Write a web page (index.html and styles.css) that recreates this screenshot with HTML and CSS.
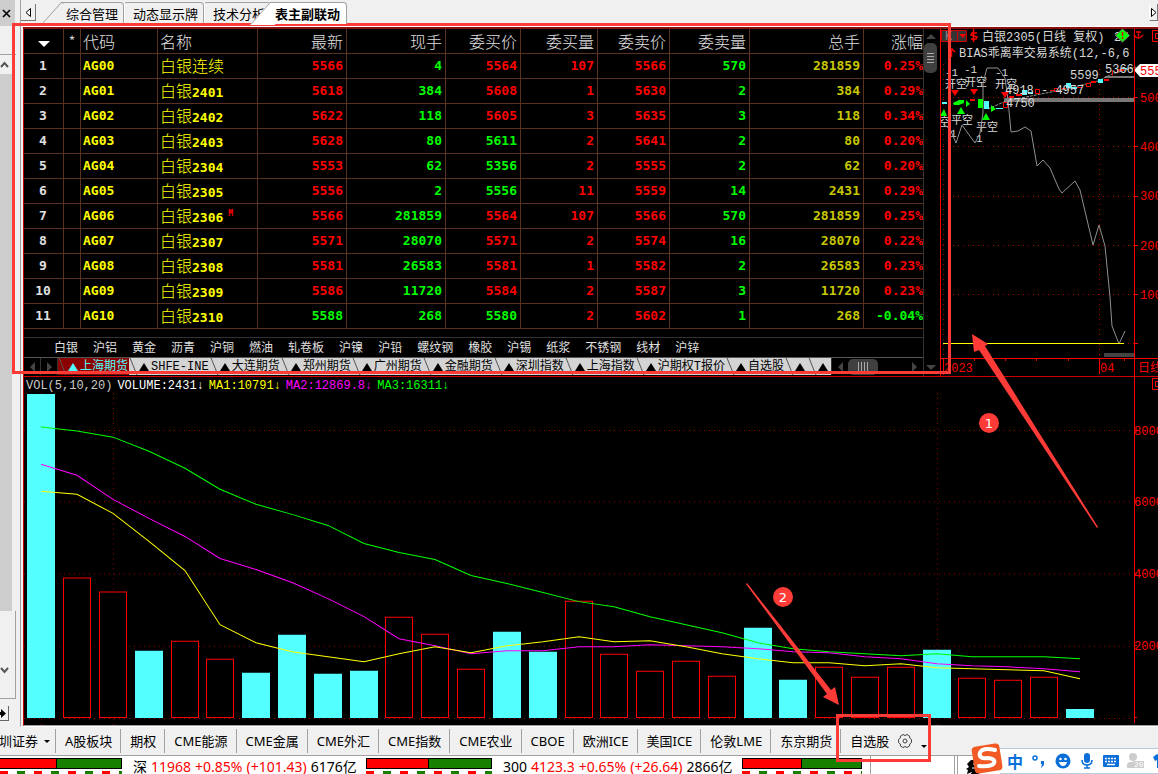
FILE: index.html
```html
<!DOCTYPE html>
<html lang="zh-CN">
<head>
    <meta charset="UTF-8">
    <meta name="viewport" content="width=device-width, initial-scale=1.0">
    <title>表主副联动</title>
    <link rel="stylesheet" href="styles.css">
</head>
<body>
    <div class="main">
        <!-- Left rail -->
        <aside class="rail">
            <button class="rail-close" aria-label="关闭"><svg width="9" height="9" viewBox="0 0 9 9"><path d="M1 1l7 7M8 1l-7 7" stroke="#000" stroke-width="1.6"/></svg></button>
            <div class="rail-gap"></div>
            <button class="rail-btn" aria-label="向上"><svg width="9" height="9" viewBox="0 0 9 9"><path d="M1 7l3.500-4L8 7" fill="none" stroke="#555" stroke-width="2"/></svg></button>
            <div class="rail-track"></div>
            <div class="rail-end">
                <button class="rail-btn" aria-label="向下"><svg width="9" height="9" viewBox="0 0 9 9"><path d="M1 2l3.500 4L8 2" fill="none" stroke="#555" stroke-width="2"/></svg></button>
            </div>
            <button class="rail-next" aria-label="展开"><svg width="6" height="9" viewBox="0 0 6 9"><path d="M0 3h1V0l5 4.500L1 9V6H0z"/></svg></button>
        </aside>

        <div class="workspace">
            <!-- Page tabs -->
            <nav class="tabs">
                <button class="tab-scroll" aria-label="左移"><svg width="6" height="9" viewBox="0 0 6 9"><path d="M5.500 .500v8L1 4.500z" fill="#fff" stroke="#000"/></svg></button>
                <button class="tab slanted">综合管理</button>
                <button class="tab">动态显示牌</button>
                <button class="tab">技术分析</button>
                <button class="tab slanted active">表主副联动</button>
                <button class="tab-scroll tab-right" aria-label="右移"><svg width="5" height="9" viewBox="0 0 5 9"><path d="M.500 .500v8L5 4.500z" fill="#fff" stroke="#000"/></svg></button>
            </nav>

            <div class="board">
                <div class="top">
                    <section class="quotes">
                        <div class="quotes-body">
                            <table class="quote-table">
                                <colgroup>
                                    <col class="w40"><col class="w17"><col class="w77"><col class="w100"><col class="w89"><col class="w99">
                                    <col class="w75"><col class="w77"><col class="w72"><col class="w80"><col class="w114"><col>
                                </colgroup>
                                <thead>
                                    <tr><th><i class="sort"></i></th><th>*</th><th>代码</th><th>名称</th><th>最新</th><th>现手</th><th>委买价</th><th>委买量</th><th>委卖价</th><th>委卖量</th><th>总手</th><th>涨幅</th></tr>
                                </thead>
                                <tbody>
                                    <tr><td>1</td><td></td><td>AG00</td><td><b>白银连续</b></td><td>5566</td><td>4</td><td>5564</td><td>107</td><td>5566</td><td>570</td><td>281859</td><td>0.25%</td></tr>
                                    <tr><td>2</td><td></td><td>AG01</td><td><b>白银</b>2401</td><td>5618</td><td>384</td><td>5608</td><td>1</td><td>5630</td><td>2</td><td>384</td><td>0.29%</td></tr>
                                    <tr><td>3</td><td></td><td>AG02</td><td><b>白银</b>2402</td><td>5622</td><td>118</td><td>5605</td><td>3</td><td>5635</td><td>3</td><td>118</td><td>0.34%</td></tr>
                                    <tr><td>4</td><td></td><td>AG03</td><td><b>白银</b>2403</td><td>5628</td><td>80</td><td class="down">5611</td><td>2</td><td>5641</td><td>2</td><td>80</td><td>0.20%</td></tr>
                                    <tr><td>5</td><td></td><td>AG04</td><td><b>白银</b>2304</td><td>5553</td><td>62</td><td class="down">5356</td><td>2</td><td>5555</td><td>2</td><td>62</td><td>0.20%</td></tr>
                                    <tr><td>6</td><td></td><td>AG05</td><td><b>白银</b>2305</td><td>5556</td><td>2</td><td class="down">5556</td><td>11</td><td>5559</td><td>14</td><td>2431</td><td>0.29%</td></tr>
                                    <tr><td>7</td><td></td><td>AG06</td><td><b>白银</b>2306 <sup>M</sup></td><td>5566</td><td>281859</td><td>5564</td><td>107</td><td>5566</td><td>570</td><td>281859</td><td>0.25%</td></tr>
                                    <tr><td>8</td><td></td><td>AG07</td><td><b>白银</b>2307</td><td>5571</td><td>28070</td><td>5571</td><td>2</td><td>5574</td><td>16</td><td>28070</td><td>0.22%</td></tr>
                                    <tr><td>9</td><td></td><td>AG08</td><td><b>白银</b>2308</td><td>5581</td><td>26583</td><td>5581</td><td>1</td><td>5582</td><td>2</td><td>26583</td><td>0.23%</td></tr>
                                    <tr><td>10</td><td></td><td>AG09</td><td><b>白银</b>2309</td><td>5586</td><td>11720</td><td>5584</td><td>2</td><td>5587</td><td>3</td><td>11720</td><td>0.23%</td></tr>
                                    <tr><td>11</td><td></td><td>AG10</td><td><b>白银</b>2310</td><td class="down">5588</td><td>268</td><td class="down">5580</td><td>2</td><td>5602</td><td>1</td><td>268</td><td class="down">-0.04%</td></tr>
                                </tbody>
                            </table>

                            <nav class="metals">
                                <a href="#">白银</a><a href="#">沪铝</a><a href="#">黄金</a><a href="#">沥青</a><a href="#">沪铜</a><a href="#">燃油</a><a href="#">轧卷板</a><a href="#">沪镍</a><a href="#">沪铅</a><a href="#">螺纹钢</a><a href="#">橡胶</a><a href="#">沪锡</a><a href="#">纸浆</a><a href="#">不锈钢</a><a href="#">线材</a><a href="#">沪锌</a>
                            </nav>

                            <div class="sheets">
                                <button class="step" aria-label="上一页"><i class="tri left"></i></button>
                                <button class="step" aria-label="下一页"><i class="tri right"></i></button>
                                <button class="sheet current">上海期货</button>
                                <button class="sheet">SHFE-INE</button>
                                <button class="sheet">大连期货</button>
                                <button class="sheet">郑州期货</button>
                                <button class="sheet">广州期货</button>
                                <button class="sheet">金融期货</button>
                                <button class="sheet">深圳指数</button>
                                <button class="sheet">上海指数</button>
                                <button class="sheet">沪期权T报价</button>
                                <button class="sheet">自选股</button>
                                <button class="sheet" aria-label="板块一"></button>
                                <button class="sheet" aria-label="板块二"></button>
                                <div class="hscroll">
                                    <i class="tri left"></i>
                                    <div class="hthumb"><i></i><i></i><i></i><i></i></div>
                                    <i class="tri right"></i>
                                </div>
                            </div>
                        </div>
                        <div class="vscroll">
                            <i class="tri up"></i>
                            <div class="vthumb"><i></i><i></i><i></i><i></i></div>
                            <i class="tri dn"></i>
                        </div>
                    </section>

                    <!-- Daily K line -->
                    <section class="kline">
                        <svg width="218" height="348" viewBox="940 29 218 348">
                            <g stroke="#a00000" stroke-dasharray="1 4" fill="none">
                                <path d="M943 97.500H1134M943 146.500H1134M943 196.500H1134M943 245.500H1134M943 294.500H1134M943 343.500H1134"/>
                                <path d="M943.500 64V358M1099.500 64V358"/>
                            </g>
                            <g fill="#777">
                                <path d="M1004 98h130v4h-130zM1105 76h29v2h-29z"/>
                                <path d="M1104 353h30v4h-30z" fill="#444"/>
                            </g>
                            <g class="signal">
                                <text x="945" y="76">-1</text><text x="964" y="73">-1</text><text x="995" y="76">-1</text>
                                <text x="945" y="88">开空</text><text x="965" y="86">开空</text><text x="995" y="88">开空</text>
                                <text x="939" y="126">空</text><text x="951" y="124">平空</text><text x="976" y="131">平空</text>
                                <text x="950" y="137">1</text><text x="976" y="142">1</text>
                            </g>
                            <path d="M943 124l7 5 6 14 6-18 5 7 8 11 5-10 3-20V83l4-15h11l7 10 3 22 3 32 7-1 7-4 6 4 6 35 6-6 7 8 9 21 3 4 13-12 5 9 13 55 6-20 6 21 5 51 2 29 7 18 6-13" fill="none" stroke="#909090"/>
                            <path d="M988 109l18-8 60-12 32-8 14-7 24-7" fill="none" stroke="#999" stroke-dasharray="3 1"/>
                            <!-- candles -->
                            <g fill="#f00">
                                <path d="M951 90h8l-4 6zM970 89h8l-4 6zM1001 92h8l-4 6zM970 99h5v2h-5zM1009 96h5v2h-5zM1016 94h6v2h-6zM1091 81h5v2h-5zM1104 79h5v2h-5zM1119 69h5v2h-5z"/>
                                <path d="M1003.500 102.500h4v5h-4zM1035.500 89.500h4v4h-4zM1054.500 88.500h3v3h-3zM1086.500 83.500h4v3h-4zM1112.500 70.500v5M1117.500 69.500v4M1050 90.500h5M1062 88.500h4M1077 87.500h5" fill="none" stroke="#f00"/>
                            </g>
                            <g fill="#0f0">
                                <path d="M940 116h7l-3-7zM957 114h8l-4-7zM982 120h8l-4-7zM953 103l6-3h5v3l-5 2h-5zM966 100l4 4-4 3zM978 99h5v9h-5zM991 105l5 4-5 3z"/>
                            </g>
                            <g fill="#54ffff">
                                <path d="M942 102h5v2h-5zM984 101h5v8h-5zM996 108h7v1h-7zM1022 90h5v5h-5zM1028 92h5v2h-5zM1066 83h5v5h-5zM1071 87h6v2h-6zM1098 79h5v4h-5zM1122 68h5v1h-5z"/>
                            </g>
                            <g class="price">
                                <text x="1005" y="94">4918 - 4957</text><text x="1006" y="107">4750</text>
                                <text x="1070" y="79">5599</text><text x="1105" y="73">5366</text>
                            </g>
                            <path d="M943 343.500H1124" stroke="#ff0"/>
                            <!-- axes -->
                            <g stroke="#f00" fill="none">
                                <path d="M940.500 29V377M1134.500 29V377M940 358.500H1158M943.500 358V375M1099.500 358V374"/>
                                <path d="M1134 97.500h4M1134 146.500h4M1134 196.500h4M1134 245.500h4M1134 294.500h4M1134 343.500h4M974.500 358v3M1005.500 358v3M1036.500 358v3M1068.500 358v3M1124.500 358v3"/>
                            </g>
                            <g class="axis">
                                <text x="1140" y="102">500</text><text x="1140" y="151">400</text><text x="1140" y="200">300</text>
                                <text x="1140" y="250">200</text><text x="1140" y="299">100</text>
                                <text x="944" y="372">2023</text><text x="1100" y="372">04</text><text x="1138" y="372">日线</text>
                            </g>
                            <path d="M1134 70l6-6h18v13h-18z" fill="#fff"/>
                            <text x="1140" y="75" class="last">555</text>
                            <!-- title row -->
                            <path d="M941.500 30.500h25v11h-25zM957.500 30v12" fill="#333" stroke="#c00"/>
                            <path d="M959 34h7l-3 4z" fill="#f00"/>
                            <text x="945" y="40" class="k">K</text>
                            <path d="M973.500 29v13M977 33h-5l-1 2 6 2-1 2h-5M951.500 57v-8M948 52l4-3 3 3" fill="none" stroke="#f00" stroke-width="1.500"/>
                            <g class="title">
                                <text x="982" y="41">白银2305(日线 复权)</text><text x="1114" y="41">2/</text>
                                <text x="959" y="57">BIAS乖离率交易系统(12,-6,6</text>
                            </g>
                            <path d="M1134 43h24v18h-24z" fill="#000"/>
                            <path d="M1122.500 29l7 6.500-7 6.500-7-6.500z" fill="#0f0" stroke="#777"/>
                            <path d="M1122.500 32v4M1122.500 37v2M1138.500 31v8M1134 35q4 6 9 0M1136 32h5" fill="none" stroke="#d00" stroke-width="1.500"/>
                            <path d="M1152.500 30.500h8v11h-8zM1155.500 33.500h6v5h-6z" fill="none" stroke="#f00"/>
                            <path d="M1134.500 29V377" stroke="#f00"/>
                        </svg>
                    </section>
                </div>

                <!-- Volume -->
                <section class="volume">
                    <div class="vol-main">
                        <div class="legend">
                            <span>VOL(5,10,20)</span><span class="white">VOLUME:2431↓</span><span class="yellow">MA1:10791↓</span><span class="magenta">MA2:12869.8↓</span><span class="green">MA3:16311↓</span>
                        </div>
                        <svg class="plot" viewBox="24 393 1110 331" preserveAspectRatio="none">
                            <path class="grid" d="M24 430.500H1134M24 501.500H1134M24 573.500H1134M24 645.500H1134M24 717.500H1134M41.500 393V724M113.500 393V724M937.500 393V724"/>
                            <path fill="#54ffff" d="M27 394h28v323h-28zM135 650h28v67h-28zM242 672h28v45h-28zM278 634h28v83h-28zM314 673h28v44h-28zM350 670h28v47h-28zM493 631h28v86h-28zM529 651h28v66h-28zM744 627h28v90h-28zM779 679h28v38h-28zM923 649h28v68h-28zM1066 708h28v9h-28z"/>
                            <path fill="#000" stroke="#f00" d="M63.500 577.500h27v139h-27zM99.500 591.500h27v125h-27zM171.500 640.500h27v76h-27zM206.500 658.500h27v58h-27zM385.500 616.500h27v100h-27zM421.500 633.500h27v83h-27zM457.500 668.500h27v48h-27zM565.500 600.500h27v116h-27zM600.500 653.500h27v63h-27zM636.500 670.500h27v46h-27zM672.500 660.500h27v56h-27zM708.500 675.500h27v41h-27zM815.500 666.500h27v50h-27zM851.500 676.500h27v40h-27zM887.500 666.500h27v50h-27zM958.500 677.500h27v39h-27zM994.500 679.500h27v37h-27zM1030.500 676.500h27v40h-27z"/>
                            <g class="ma">
                                <polyline stroke="#0f0" points="41,427 77,431 113,437 149,451 185,468 220,489 256,504 292,514 328,525 364,543 399,552 435,559 471,575 507,583 543,592 579,601 614,606 650,616 686,624 722,632 758,642 793,648 829,651 865,653 901,655 937,653 972,656 1008,656 1044,656 1080,658"/>
                                <polyline stroke="#f0f" points="41,464 77,475 113,499 149,518 185,536 220,558 256,569 292,582 328,598 364,616 399,638 435,645 471,653 507,650 543,650 579,646 614,646 650,644 686,645 722,646 758,648 793,651 829,652 865,656 901,658 937,663 972,665 1008,666 1044,668 1080,671"/>
                                <polyline stroke="#ff0" points="41,491 77,494 113,513 149,541 185,570 220,624 256,642 292,651 328,656 364,661 399,653 435,646 471,652 507,645 543,641 579,636 614,641 650,640 686,646 722,653 758,658 793,662 829,662 865,665 901,663 937,667 972,668 1008,669 1044,670 1080,678"/>
                            </g>
                        </svg>
                    </div>
                    <svg class="vol-axis" width="24" height="347" viewBox="1134 377 24 347">
                        <path d="M1134.500 377V723M1134 430.500h3M1134 501.500h3M1134 573.500h3M1134 645.500h3M1134 717.500h3M1152.500 378.500h8v11h-8zM1155.500 381.500h6v5h-6z" fill="none" stroke="#f00"/>
                        <g class="axis">
                            <text x="1134" y="435">8000</text><text x="1134" y="506">6000</text><text x="1134" y="578">4000</text><text x="1134" y="650">2000</text>
                        </g>
                    </svg>
                </section>
            </div>
        </div>
    </div>

    <!-- Market tabs -->
    <nav class="markets">
        <button class="market first"><span>深圳证券</span><i class="caret"></i></button>
        <button class="market">A股板块</button>
        <button class="market">期权</button>
        <button class="market">CME能源</button>
        <button class="market">CME金属</button>
        <button class="market">CME外汇</button>
        <button class="market">CME指数</button>
        <button class="market">CME农业</button>
        <button class="market">CBOE</button>
        <button class="market">欧洲ICE</button>
        <button class="market">美国ICE</button>
        <button class="market">伦敦LME</button>
        <button class="market">东京期货</button>
        <button class="market own">自选股
            <svg width="16" height="16" viewBox="0 0 16 16" fill="none" stroke="#444"><path d="M6 1.500Q8 3.500 10 1.500L12.500 3Q12 5.500 14.500 6.500V9.500Q12 10.500 12.500 13L10 14.500Q8 12.500 6 14.500L3.500 13Q4 10.500 1.500 9.500V6.500Q4 5.500 3.500 3Z"/><circle cx="8" cy="8" r="2"/></svg>
            <i class="caret low"></i>
        </button>
    </nav>

    <!-- Index bar -->
    <footer class="status">
        <div class="ratio r1"><div class="meter"></div><div class="ticks"></div></div>
        <div class="index sz">深 <em>11968</em> <em>+0.85%</em> <em>(+101.43)</em> 6176亿</div>
        <div class="ratio r2"><div class="meter"></div><div class="ticks"></div></div>
        <div class="index hs">300 <em>4123.3</em> <em>+0.65%</em> <em>(+26.64)</em> 2866亿</div>
        <div class="ratio r3"><div class="meter"></div><div class="ticks"></div></div>
        <div class="slot"></div>
        <div class="slot wide"><svg width="14" height="16" viewBox="0 0 14 16"><path d="M2 5l4-4h8v15H5l2-3-5 2 1-4-2-1 3-2z"/><path d="M8 5h6M7 9h5" stroke="#fff"/></svg></div>
    </footer>

    <!-- Input method bar -->
    <div class="ime">
        <svg class="sogou" width="34" height="32" viewBox="0 0 34 32"><rect x="3" y="3" width="28" height="27" rx="4" fill="#f15a24" transform="rotate(-9 17 16)"/><path d="M25 8Q12 5 10 11T18 16Q26 17 24 21T9 24" fill="none" stroke="#fff" stroke-width="4" stroke-linecap="round"/></svg>
        <div class="ime-bar">
            <span class="zh">中</span>
            <svg width="16" height="16" viewBox="0 0 16 16"><circle cx="4" cy="5" r="2" fill="none" stroke="#0a6fd8" stroke-width="1.500"/><path d="M10 8h3v4l-3 3 1-4h-1z" fill="#0a6fd8"/></svg>
            <svg width="16" height="16" viewBox="0 0 16 16"><circle cx="8" cy="8" r="7.500" fill="#0a6fd8"/><circle cx="5.500" cy="6" r="1.300" fill="#fff"/><circle cx="10.500" cy="6" r="1.300" fill="#fff"/><path d="M4 9h8q-1 4-4 4T4 9z" fill="#fff"/></svg>
            <svg width="16" height="16" viewBox="0 0 16 16"><rect x="5" y="0" width="6" height="10" rx="3" fill="#0a6fd8"/><path d="M3 7q0 5 5 5t5-5M8 12v3M5 15h6" fill="none" stroke="#0a6fd8" stroke-width="1.500"/></svg>
            <svg width="16" height="16" viewBox="0 0 16 16"><rect x="0" y="2" width="16" height="12" rx="1" fill="#0a6fd8"/><path d="M2 5.500h12M2 8.500h12" stroke="#fff" stroke-width="1.500" stroke-dasharray="2 1"/><path d="M4 11.500h8" stroke="#fff" stroke-width="1.500"/></svg>
            <svg width="18" height="16" viewBox="0 0 18 16"><circle cx="6" cy="4" r="4" fill="#ccc"/><path d="M0 15V12q0-3 4-3h4v6z" fill="#ccc"/><rect x="6" y="8" width="11" height="7" fill="#ccc"/><text x="7" y="14" class="badge">20</text></svg>
            <svg width="16" height="16" viewBox="0 0 16 16"><path d="M0 4l4-3q4 3 8 0l4 3-2 4-2-1v8H4V7L2 8z" fill="#0a6fd8"/></svg>
        </div>
    </div>

    <!-- Callouts -->
    <svg class="callouts" width="1158" height="774" viewBox="0 0 1158 774">
        <g fill="none" stroke="#ff3b38" stroke-width="3">
            <rect x="13.500" y="24.500" width="936" height="348"/>
            <rect x="837.500" y="715.500" width="92" height="45"/>
        </g>
        <g fill="#ff3b38">
            <path d="M972 334L988 344L985 346L1098 527L1097 528L979 350L974 352Z"/>
            <path d="M839 705L835 687L831 690L747 583L746 584L827 694L823 697Z"/>
            <circle cx="989" cy="423" r="10"/>
            <circle cx="783" cy="597" r="10"/>
        </g>
        <text x="989" y="428">1</text>
        <text x="783" y="602">2</text>
    </svg>
</body>
</html>
```

FILE: styles.css
```css
/* General */
* {
    box-sizing: border-box;
    margin: 0;
    padding: 0;
}

body {
    display: flex;
    flex-direction: column;
    position: relative;
    height: 100vh;
    overflow: hidden;
    background: #f0f0f0;
    color: #000;
    font-family: "Noto Sans", "Noto Sans CJK SC", sans-serif;
    font-size: 13px;
}

button {
    border: none;
    background: none;
    color: inherit;
    font: inherit;
    white-space: nowrap;
    cursor: pointer;
}

svg {
    display: block;
    flex: none;
}

.main {
    display: flex;
    flex: 1;
    min-height: 0;
}

/* Left rail */
.rail {
    display: flex;
    flex-direction: column;
    align-items: flex-start;
    width: 20px;
    padding-bottom: 6px;
}

.rail-close {
    width: 15px;
    height: 26px;
    padding-left: 2px;
    background: #cdcdcd;
}

.rail-gap {
    width: 16px;
    height: 29px;
    border-bottom: 1px solid #a0a0a0;
}

.rail-btn {
    width: 12px;
    height: 19px;
}

.rail-track {
    flex: 1;
    width: 12px;
    background: #cdcdcd;
}

.rail-end {
    width: 16px;
    height: 88px;
    margin-bottom: 7px;
    padding-top: 50px;
    border-right: 1px solid #a0a0a0;
    border-bottom: 1px solid #a0a0a0;
}

.rail-next {
    width: 9px;
    height: 15px;
    border-right: 1px solid #666;
    border-bottom: 1px solid #666;
}

/* Page tabs */
.workspace {
    display: flex;
    flex-direction: column;
    flex: 1;
    min-width: 0;
    border-left: 1px solid #a0a0a0;
    border-bottom: 1px solid #fff;
}

.tabs {
    display: flex;
    height: 27px;
    padding: 2px 0 4px;
    border-bottom: 1px solid #fff;
}

.tab-scroll {
    display: flex;
    align-items: center;
    justify-content: center;
    width: 15px;
    height: 17px;
    margin: 2px 26px 0 0;
    border-right: 1px solid #777;
    border-bottom: 1px solid #777;
}

.tab-right {
    margin: 2px 0 0 auto;
    width: 9px;
    border-left: 1px solid #fff;
}

.tab {
    position: relative;
    height: 22px;
    padding: 0 5px 0 8px;
    border-top: 1px solid #a0a0a0;
    border-right: 1px solid #a0a0a0;
    border-left: 1px solid #fff;
    border-radius: 3px 4px 0 0;
    line-height: 20px;
}

.tab.slanted {
    padding-left: 4px;
    border-left: none;
}

.tab.slanted::before {
    content: "";
    position: absolute;
    top: -1px;
    left: -11px;
    z-index: -1;
    width: 24px;
    height: 22px;
    border-top: 1px solid #a0a0a0;
    border-left: 1px solid #a0a0a0;
    transform: skewX(-42deg);
}

.tab.active {
    z-index: 1;
    padding-right: 6px;
    background: #fff;
    font-weight: bold;
}

.tab.active::before {
    background: #fff;
}

/* Quote board */
.board {
    display: flex;
    flex-direction: column;
    flex: 1;
    min-height: 0;
    margin-left: 2px;
    border-top: 2px solid #8a1010;
    border-left: 1px solid #c00000;
    border-bottom: 1px solid #a0a0a0;
    background: #000;
}

.top {
    display: flex;
    height: 348px;
    border-bottom: 1px solid #d00000;
}

.quotes {
    display: flex;
    flex: 1;
    min-width: 0;
}

.quotes-body {
    display: flex;
    flex-direction: column;
    flex: 1;
    min-width: 0;
    overflow: hidden;
}

.quote-table {
    width: 100%;
    margin-bottom: 8px;
    border-spacing: 0;
    table-layout: fixed;
    color: #f00;
    font: bold 13px/16px "DejaVu Sans Mono", "Noto Sans CJK SC", monospace;
    text-align: right;
}

.w17 { width: 17px; }
.w40 { width: 40px; }
.w72 { width: 72px; }
.w75 { width: 75px; }
.w77 { width: 77px; }
.w80 { width: 80px; }
.w89 { width: 89px; }
.w99 { width: 99px; }
.w100 { width: 100px; }
.w114 { width: 114px; }

.quote-table th,
.quote-table td {
    height: 25px;
    padding: 0 3px 0 2px;
    overflow: hidden;
    border-right: 1px solid #5a3020;
    border-bottom: 1px solid #5a3020;
    white-space: nowrap;
}

.quote-table th {
    color: #e0e0e0;
    font: 300 16px/20px "Noto Sans CJK SC", sans-serif;
}

.quote-table th:last-child,
.quote-table td:last-child {
    padding: 0;
    border-right: none;
}

.quote-table th:nth-child(-n+2) {
    padding: 0;
    text-align: center;
}

.quote-table td:first-child {
    color: #e0e0e0;
    text-align: center;
}

.quote-table th:nth-child(3),
.quote-table th:nth-child(4) {
    text-align: left;
}

.quote-table td:nth-child(3),
.quote-table td:nth-child(4) {
    color: #ff0;
    text-align: left;
}

.quote-table td:nth-child(6),
.quote-table td:nth-child(10),
.quote-table .down {
    color: #0f0;
}

.quote-table td:nth-child(11) {
    color: #c8c800;
}

.quote-table b {
    font: 300 16px/16px "Noto Sans CJK SC", sans-serif;
}

.quote-table sup {
    margin-left: -3px;
    color: #f00;
    font-size: 8px;
    line-height: 8px;
}

.sort {
    display: inline-block;
    border: 6px solid transparent;
    border-top-color: #fff;
    border-bottom: none;
    vertical-align: middle;
}

.metals {
    display: flex;
    gap: 15px;
    height: 20px;
    padding-left: 30px;
    border-top: 1px solid #333;
    font: 12px/18px "Noto Sans CJK SC", sans-serif;
    white-space: nowrap;
}

.metals a {
    color: #e0e0e0;
    text-decoration: none;
}

.sheets {
    display: flex;
    height: 18px;
    border-top: 1px solid #555;
    color: #000;
    font: 12px/16px "Liberation Mono", "Noto Sans CJK SC", monospace;
}

.step {
    display: flex;
    align-items: center;
    justify-content: center;
    width: 17px;
    border-right: 1px solid #333;
}

.sheet {
    display: flex;
    align-items: center;
    position: relative;
    padding: 0 1px 0 10px;
    background: #d4d4d4;
}

.sheet::before {
    content: "";
    margin-right: 2px;
    border: 5px solid transparent;
    border-top: none;
    border-bottom: 8px solid #000;
}

.sheet::after {
    content: "";
    position: absolute;
    top: 0;
    left: 2px;
    width: 2px;
    height: 100%;
    border-right: 1px solid #555;
    transform: skewX(22deg);
}

.sheet.current {
    background: #8b0000;
    color: #54ffff;
}

.sheet.current::before {
    border-bottom-color: #54ffff;
}

.tri {
    display: block;
    border: 5px solid transparent;
}

.tri.left { border-right-color: #444; border-left: none; }
.tri.right { border-left-color: #444; border-right: none; }
.tri.up { border-bottom-color: #444; border-top: none; }
.tri.dn { border-top-color: #444; border-bottom: none; }

.hscroll {
    display: flex;
    align-items: center;
    flex: 1;
    padding: 0 6px;
    border-left: 1px solid #333;
}

.hthumb {
    display: flex;
    align-items: center;
    justify-content: center;
    gap: 2px;
    width: 30px;
    height: 16px;
    margin: 0 auto 0 5px;
    border-radius: 5px;
    background: #404040;
}

.hthumb i {
    width: 1px;
    height: 9px;
    background: #aaa;
}

.vscroll {
    display: flex;
    flex-direction: column;
    align-items: center;
    width: 17px;
    padding: 5px 3px 6px 0;
    border-left: 1px solid #333;
}

.vthumb {
    display: flex;
    flex-direction: column;
    align-items: center;
    justify-content: center;
    gap: 2px;
    width: 13px;
    height: 30px;
    margin: 4px 0 auto;
    border-radius: 5px;
    background: #404040;
}

.vthumb i {
    width: 7px;
    height: 1px;
    background: #aaa;
}

.kline {
    width: 218px;
}

/* Chart texts */
svg text {
    font: 12px "Liberation Mono", "Noto Sans CJK SC", monospace;
}

.title,
.price,
.signal {
    fill: #d8d8d8;
}

svg .signal text {
    font-size: 11px;
}

.axis,
.last {
    fill: #f00;
}

.k {
    fill: #888;
}

/* Volume */
.volume {
    display: flex;
    flex: 1;
    min-height: 0;
}

.vol-main {
    display: flex;
    flex-direction: column;
    flex: 1;
    min-width: 0;
}

.legend {
    display: flex;
    gap: 5px;
    height: 16px;
    padding-left: 2px;
    color: #ccc;
    font: 12px/18px "Liberation Mono", monospace;
    white-space: nowrap;
}

.white { color: #fff; }
.yellow { color: #ff0; }
.magenta { color: #f0f; }
.green { color: #0f0; }

.plot {
    flex: 1;
    width: 100%;
    min-height: 0;
}

.grid {
    fill: none;
    stroke: #900000;
    stroke-dasharray: 1 4;
}

.ma {
    fill: none;
}

/* Market tabs */
.markets {
    display: flex;
    align-items: center;
    height: 28px;
}

.market {
    display: flex;
    align-items: center;
    height: 24px;
    padding: 0 8px 0 9px;
    border-right: 1px solid #a0a0a0;
    line-height: 24px;
}

.market.first {
    justify-content: flex-end;
    gap: 6px;
    width: 56px;
    padding: 0 5px 0 0;
}

.market.own {
    gap: 8px;
    border: none;
}

.caret {
    border: 3px solid transparent;
    border-top-color: #000;
    border-bottom: none;
}

.caret.low {
    margin-top: 10px;
}

/* Index bar */
.status {
    display: flex;
    height: 19px;
    border-top: 1px solid #a0a0a0;
    background: #fff;
    font-size: 14px;
    line-height: 22px;
    white-space: nowrap;
}

.ratio {
    width: 126px;
    padding-top: 2px;
}

.r1 { width: 122px; }
.r3 { width: 120px; }

.meter {
    height: 11px;
    border: 1px solid #000;
    background: linear-gradient(90deg, #f00 0 49%, #000 49% 50%, #188000 50%);
}

.r1 .meter {
    border-left: none;
    background: linear-gradient(90deg, #f00 0 46%, #000 46% 47%, #188000 47%);
}

.ticks {
    height: 3px;
    margin-top: 2px;
    background: repeating-linear-gradient(90deg, #f00 0 8px, #fff 8px 17px, #188000 17px 25px, #fff 25px 34px);
}

.index {
    display: flex;
    gap: 4px;
    height: 18px;
}

.index.sz {
    width: 244px;
    padding-left: 11px;
}

.index.hs {
    width: 250px;
    padding-left: 11px;
}

.index em {
    color: #f00;
    font-style: normal;
}

.slot {
    width: 85px;
    margin-left: 8px;
    border-left: 1px solid #a0a0a0;
    border-right: 1px solid #a0a0a0;
}

.slot.wide {
    flex: 1;
    margin-left: 2px;
    padding: 3px 0 0 7px;
}

/* Input method bar */
.ime {
    display: flex;
    align-items: flex-end;
    position: absolute;
    right: 0;
    bottom: 0;
    width: 188px;
}

.sogou {
    z-index: 1;
}

.ime-bar {
    display: flex;
    align-items: center;
    flex: 1;
    gap: 8px;
    height: 26px;
    margin-left: -4px;
    padding-left: 7px;
    overflow: hidden;
    border-top: 1px solid #b8cce0;
    border-bottom: 1px solid #b8cce0;
    background: #fff;
}

.zh {
    color: #0a6fd8;
    font: bold 16px/22px "Noto Sans CJK SC", sans-serif;
}

svg .badge {
    fill: #fff;
    font-size: 8px;
}

/* Callouts */
.callouts {
    position: absolute;
    top: 0;
    left: 0;
    pointer-events: none;
}

.callouts text {
    fill: #fff;
    font: 13px "DejaVu Sans", sans-serif;
    text-anchor: middle;
}
```
